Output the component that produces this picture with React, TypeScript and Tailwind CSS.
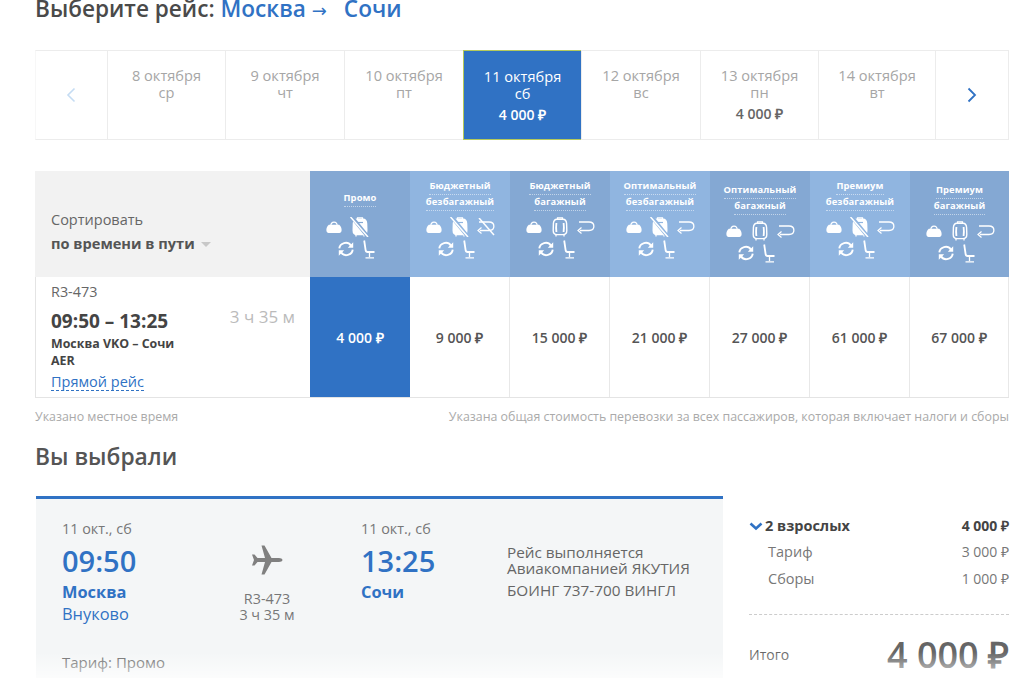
const DAYS = [
  { date: '8 октября', day: 'ср', w: 'w-[118px]' },
  { date: '9 октября', day: 'чт', w: 'w-[119px]' },
  { date: '10 октября', day: 'пт', w: 'w-[119px]' },
  { date: '11 октября', day: 'сб', price: '4 000 ₽', active: true, w: 'w-[118px]' },
  { date: '12 октября', day: 'вс', w: 'w-[119px]' },
  { date: '13 октября', day: 'пн', price: '4 000 ₽', w: 'w-[118px]' },
  { date: '14 октября', day: 'вт', w: 'w-[117px]' },
];

const TARIFFS = [
  { lines: ['Промо'], price: '4 000 ₽', dark: true, top: 'pt-[20px]', gap: 'mb-[10px]', suit: false, back: null, active: true, w: 'w-[100px]' },
  { lines: ['Бюджетный', 'безбагажный'], price: '9 000 ₽', dark: false, top: 'pt-[8px]', gap: 'mb-[6px]', suit: false, back: false, w: 'w-[100px]' },
  { lines: ['Бюджетный', 'багажный'], price: '15 000 ₽', dark: true, top: 'pt-[8px]', gap: 'mb-[6px]', suit: true, back: true, w: 'w-[100px]' },
  { lines: ['Оптимальный', 'безбагажный'], price: '21 000 ₽', dark: false, top: 'pt-[8px]', gap: 'mb-[6px]', suit: false, back: true, w: 'w-[100px]' },
  { lines: ['Оптимальный', 'багажный'], price: '27 000 ₽', dark: true, top: 'pt-[12px]', gap: 'mb-[6px]', suit: true, back: true, w: 'w-[100px]' },
  { lines: ['Премиум', 'безбагажный'], price: '61 000 ₽', dark: false, top: 'pt-[8px]', gap: 'mb-[6px]', suit: false, back: true, w: 'w-[100px]' },
  { lines: ['Премиум', 'багажный'], price: '67 000 ₽', dark: true, top: 'pt-[12px]', gap: 'mb-[6px]', suit: true, back: true, w: 'w-[99px]' },
];

function Bag() {
  return (
    <svg width="16" height="16" viewBox="0 0 16 16" fill="none">
      <path d="M4.8 7 C4.8 1.8 11.2 1.8 11.2 7" stroke="#fff" strokeWidth="1.2" />
      <path d="M2.8 5.8 H13.2 C15 7.5 15.8 9.5 15.6 11.6 C15.5 13.2 14.6 14 13.4 14 H2.6 C1.4 14 0.5 13.2 0.4 11.6 C0.2 9.5 1 7.5 2.8 5.8 Z" fill="#fff" />
    </svg>
  );
}

function Suitcase({ off }: { off?: boolean }) {
  return (
    <svg width="20" height="20" viewBox="0 0 20 20" fill="none">
      <path d="M7.5 2.5 V0.8 H12.5 V2.5" stroke="#fff" strokeWidth="1.2" />
      <path d="M7 2.2 H13 C15.2 2.2 16.4 4 16.6 6.5 L16.8 13.5 C16.8 16.2 15.4 17.6 13 17.6 H7 C4.6 17.6 3.2 16.2 3.2 13.5 L3.4 6.5 C3.6 4 4.8 2.2 7 2.2 Z" fill={off ? '#fff' : 'none'} stroke="#fff" strokeWidth="1.4" />
      {!off && <path d="M6.4 6 C6 9 6 12 6.4 15 M13.6 6 C14 9 14 12 13.6 15" stroke="#fff" strokeWidth="1.8" />}
      {off && <path d="M7 5.5 H13" stroke="currentColor" strokeWidth="1.2" />}
      <path d="M6 17.6 V19.4 M14 17.6 V19.4" stroke="#fff" strokeWidth="1.3" />
      {off && (
        <>
          <path d="M1.5 -0.5 L18.5 20.5" stroke="currentColor" strokeWidth="3.6" />
          <path d="M0.5 0 L18 20" stroke="#fff" strokeWidth="1.5" />
        </>
      )}
    </svg>
  );
}

function Back({ off }: { off?: boolean }) {
  return (
    <svg width="20" height="18" viewBox="0 0 20 18" fill="none">
      <path d="M3 4 H13 C19.5 4 19.5 12.5 13 12.5 H4" stroke="#fff" strokeWidth="1.3" />
      <path d="M5.5 9.5 L2 12.5 L5.5 15.5" stroke="#fff" strokeWidth="1.2" />
      {off && <path d="M3 0 L18 17" stroke="#fff" strokeWidth="1.5" />}
    </svg>
  );
}

function Refresh() {
  return (
    <svg width="16" height="16" viewBox="0 0 16 16" fill="none">
      <path d="M1.3 7.4 C1.8 2 9.5 -0.4 13 4.6" stroke="#fff" strokeWidth="1.9" />
      <path d="M14.7 8.6 C14.2 14 6.5 16.4 3 11.4" stroke="#fff" strokeWidth="1.9" />
      <path d="M15.2 1.2 V6.8 H9.8 Z M0.8 14.8 V9.2 H6.2 Z" fill="#fff" />
    </svg>
  );
}

function Seat() {
  return (
    <svg width="12" height="19" viewBox="0 0 12 19" fill="none">
      <path d="M1.2 0.5 L2.6 10 C2.8 11.4 3.4 12 4.6 12 H11.5" stroke="#fff" strokeWidth="1.8" />
      <path d="M6.5 12 V17 M2.5 17.8 H11" stroke="#fff" strokeWidth="1.3" />
    </svg>
  );
}

function TariffHead({ t }: { t: (typeof TARIFFS)[number] }) {
  return (
    <div className={`${t.w} flex flex-col items-center ${t.top} ${t.dark ? 'bg-[#84a8d3] text-[#84a8d3]' : 'bg-[#90b5e0] text-[#90b5e0]'}`}>
      <div className={`flex flex-col items-center ${t.gap}`}>
        {t.lines.map((l) => (
          <span key={l} className="h-[16px] border-b border-dotted border-white/50 text-[9.4px] font-bold leading-[13px] tracking-[0.1px] text-white">
            {l}
          </span>
        ))}
      </div>
      <div className="flex h-[20px] items-center justify-center">
        <span className="flex w-[26px] justify-center"><Bag /></span>
        <span className="flex w-[26px] justify-center">{t.suit ? <Suitcase /> : <Suitcase off />}</span>
        <span className="flex w-[26px] justify-center">
          {t.back !== null && <Back off={!t.back} />}
        </span>
      </div>
      <div className="mt-[2px] flex h-[20px] items-center justify-center gap-[9px] pr-[7px]">
        <Refresh />
        <Seat />
      </div>
    </div>
  );
}

export default function App() {
  return (
    <div className="relative h-[678px] w-[1024px] overflow-hidden bg-white pl-[35px] pr-[15px] font-['Open_Sans',sans-serif] text-[#666]">
      <h1 className="-mt-[6px] h-[56px] text-[22.6px] font-semibold leading-[30px] text-[#4a4a4a]">
        Выберите рейс: <span className="text-[#3072c4]">Москва <span className="font-['DejaVu_Sans',sans-serif] text-[18px] font-normal">→</span><span className="ml-[17px]">Сочи</span></span>
      </h1>

      {/* date strip */}
      <div className="flex h-[90px] border border-[#ececec] border-l-[#f7f7f7] bg-white">
        <div className="flex w-[71px] items-center justify-center text-[#c5dcf3]">
          <svg width="10" height="16" viewBox="0 0 10 16" fill="none" className="mr-[1px]">
            <path d="M8.5 1.5 L2 8 L8.5 14.5" stroke="currentColor" strokeWidth="1.6" />
          </svg>
        </div>
        {DAYS.map((d) => (
          <div
            key={d.date}
            className={`${d.w} flex flex-col items-center pt-[16px] text-[14.6px] leading-[17px] ${
              d.active
                ? '-my-px border border-r-0 border-[#b5c95c] bg-[#3072c4] pt-[17px] text-white'
                : 'border-l border-[#ececec] text-[#a6a6a6]'
            }`}
          >
            <span>{d.date}</span>
            <span>{d.day}</span>
            {d.price && (
              <span className={`mt-[4px] text-[14px] font-semibold leading-[18px] ${d.active ? 'text-white' : 'text-[#666]'}`}>
                {d.price}
              </span>
            )}
          </div>
        ))}
        <div className="flex flex-1 items-center justify-center border-l border-[#ececec] text-[#3072c4]">
          <svg width="10" height="16" viewBox="0 0 10 16" fill="none">
            <path d="M1.5 1.5 L8 8 L1.5 14.5" stroke="currentColor" strokeWidth="1.8" />
          </svg>
        </div>
      </div>

      {/* tariffs table */}
      <div className="mt-[31px]">
        <div className="flex h-[106px]">
          <div className="flex w-[275px] flex-col justify-center bg-[#f2f2f2] pl-[16px] pt-[15px]">
            <span className="text-[14.5px] leading-[22px] text-[#666]">Сортировать</span>
            <span className="mt-[1px] flex items-center text-[14.6px] font-bold leading-[22px] text-[#555]">
              по времени в пути
              <span className="ml-[6px] mt-[2px] h-0 w-0 border-x-[5px] border-t-[5px] border-x-transparent border-t-[#c8c8c8]" />
            </span>
          </div>
          {TARIFFS.map((t) => (
            <TariffHead key={t.price} t={t} />
          ))}
        </div>
        <div className="flex h-[121px] border-b border-[#e4e4e4]">
          <div className="flex w-[275px] justify-between border-l border-[#e4e4e4] pl-[15px] pr-[15px] pt-[5px]">
            <div className="flex flex-col">
              <span className="text-[14.4px] leading-[20px] text-[#666]">R3-473</span>
              <span className="mt-[7px] text-[19px] font-bold leading-[24px] text-[#444]">09:50 – 13:25</span>
              <span className="mt-[2px] w-[130px] text-[12.4px] font-bold leading-[17px] text-[#444]">Москва VKO – Сочи AER</span>
              <span className="mt-[5px] w-fit border-b border-dashed border-[#3072c4] text-[14.5px] leading-[16px] text-[#3072c4]">Прямой рейс</span>
            </div>
            <span className="mt-[25px] whitespace-nowrap text-[17px] leading-[20px] text-[#bbb]">3 ч 35 м</span>
          </div>
          {TARIFFS.map((t) => (
            <div
              key={t.price}
              className={`${t.w} flex items-center justify-center whitespace-nowrap text-[14px] font-semibold ${
                t.active ? 'bg-[#3072c4] text-white' : 'border-r border-[#e8e8e8] text-[#555]'
              }`}
            >
              {t.price}
            </div>
          ))}
        </div>
      </div>

      <div className="mt-[10px] flex justify-between text-[12.4px] leading-[17px] text-[#aaa]">
        <span>Указано местное время</span>
        <span>Указана общая стоимость перевозки за всех пассажиров, которая включает налоги и сборы</span>
      </div>

      <h2 className="mt-[17px] text-[22.8px] font-semibold leading-[30px] text-[#555]">Вы выбрали</h2>

      {/* selection */}
      <div className="mt-[24px] flex">
        <div className="ml-px flex h-[200px] w-[687px] border-t-[3px] border-[#3072c4] bg-[#f4f6f7] pl-[26px] pt-[21px]">
          <div className="flex w-[299px] flex-col">
            <div className="flex">
              <div className="flex w-[150px] flex-col text-[#3072c4]">
                <span className="text-[14.4px] leading-[17px] text-[#777]">11 окт., сб</span>
                <span className="mt-[4px] text-[29px] font-semibold leading-[40px]">09:50</span>
                <span className="text-[16.4px] font-bold leading-[22px]">Москва</span>
                <span className="text-[16.4px] leading-[22px]">Внуково</span>
              </div>
              <div className="flex w-[149px]">
                <div className="-ml-[1px] mt-[24px] flex w-[112px] flex-col items-center text-[14.4px] leading-[16px] text-[#777]">
                  <svg width="32" height="32" viewBox="0 0 32 32" className="mb-[15px]">
                    <path d="M31.5 16 C31.5 14.8 29.8 14 28 14 H20.5 L13.5 1.5 H10.5 L14 14 H6.5 L3.5 10.5 H1 L3 16 L1 21.5 H3.5 L6.5 18 H14 L10.5 30.5 H13.5 L20.5 18 H28 C29.8 18 31.5 17.2 31.5 16 Z" fill="#808080" />
                  </svg>
                  <span>R3-473</span>
                  <span>3 ч 35 м</span>
                </div>
              </div>
            </div>
            <span className="mt-[27px] text-[15px] leading-[20px] text-[#666]">Тариф: Промо</span>
          </div>
          <div className="flex w-[146px] flex-col text-[#3072c4]">
            <span className="text-[14.4px] leading-[17px] text-[#777]">11 окт., сб</span>
            <span className="mt-[4px] text-[29px] font-semibold leading-[40px]">13:25</span>
            <span className="text-[16.4px] font-bold leading-[22px]">Сочи</span>
          </div>
          <div className="mt-[24px] flex flex-col text-[15.3px] leading-[16px] text-[#666]">
            <span>Рейс выполняется</span>
            <span>Авиакомпанией ЯКУТИЯ</span>
            <span className="mt-[6px]">БОИНГ 737-700 ВИНГЛ</span>
          </div>
        </div>

        <div className="ml-[26px] flex flex-1 flex-col pt-[18px] text-[14.5px] leading-[24px]">
          <div className="flex items-center justify-between font-bold text-[#444]">
            <span className="flex items-center">
              <svg width="14" height="9" viewBox="0 0 14 9" className="mr-[2px]">
                <path d="M1.5 1.5 L7 6.5 L12.5 1.5" stroke="#3072c4" strokeWidth="2.6" fill="none" />
              </svg>
              2 взрослых
            </span>
            <span className="text-[14px]">4 000 ₽</span>
          </div>
          <div className="mt-[2px] flex justify-between pl-[19px] text-[#777]">
            <span>Тариф</span>
            <span className="text-[14px]">3 000 ₽</span>
          </div>
          <div className="mt-[3px] flex justify-between pl-[19px] text-[#777]">
            <span>Сборы</span>
            <span className="text-[14px]">1 000 ₽</span>
          </div>
          <div className="mt-[23px] border-t border-dashed border-[#ccc]" />
          <div className="mt-[16px] flex items-center justify-between">
            <span className="text-[14px] text-[#666]">Итого</span>
            <span className="text-[36px] font-semibold leading-[48px] text-[#666]">4 000 ₽</span>
          </div>
        </div>
      </div>

      {/* fade at the bottom edge */}
      <div className="absolute inset-x-0 bottom-0 h-[26px] bg-gradient-to-t from-white/70 to-white/0" />
    </div>
  );
}
